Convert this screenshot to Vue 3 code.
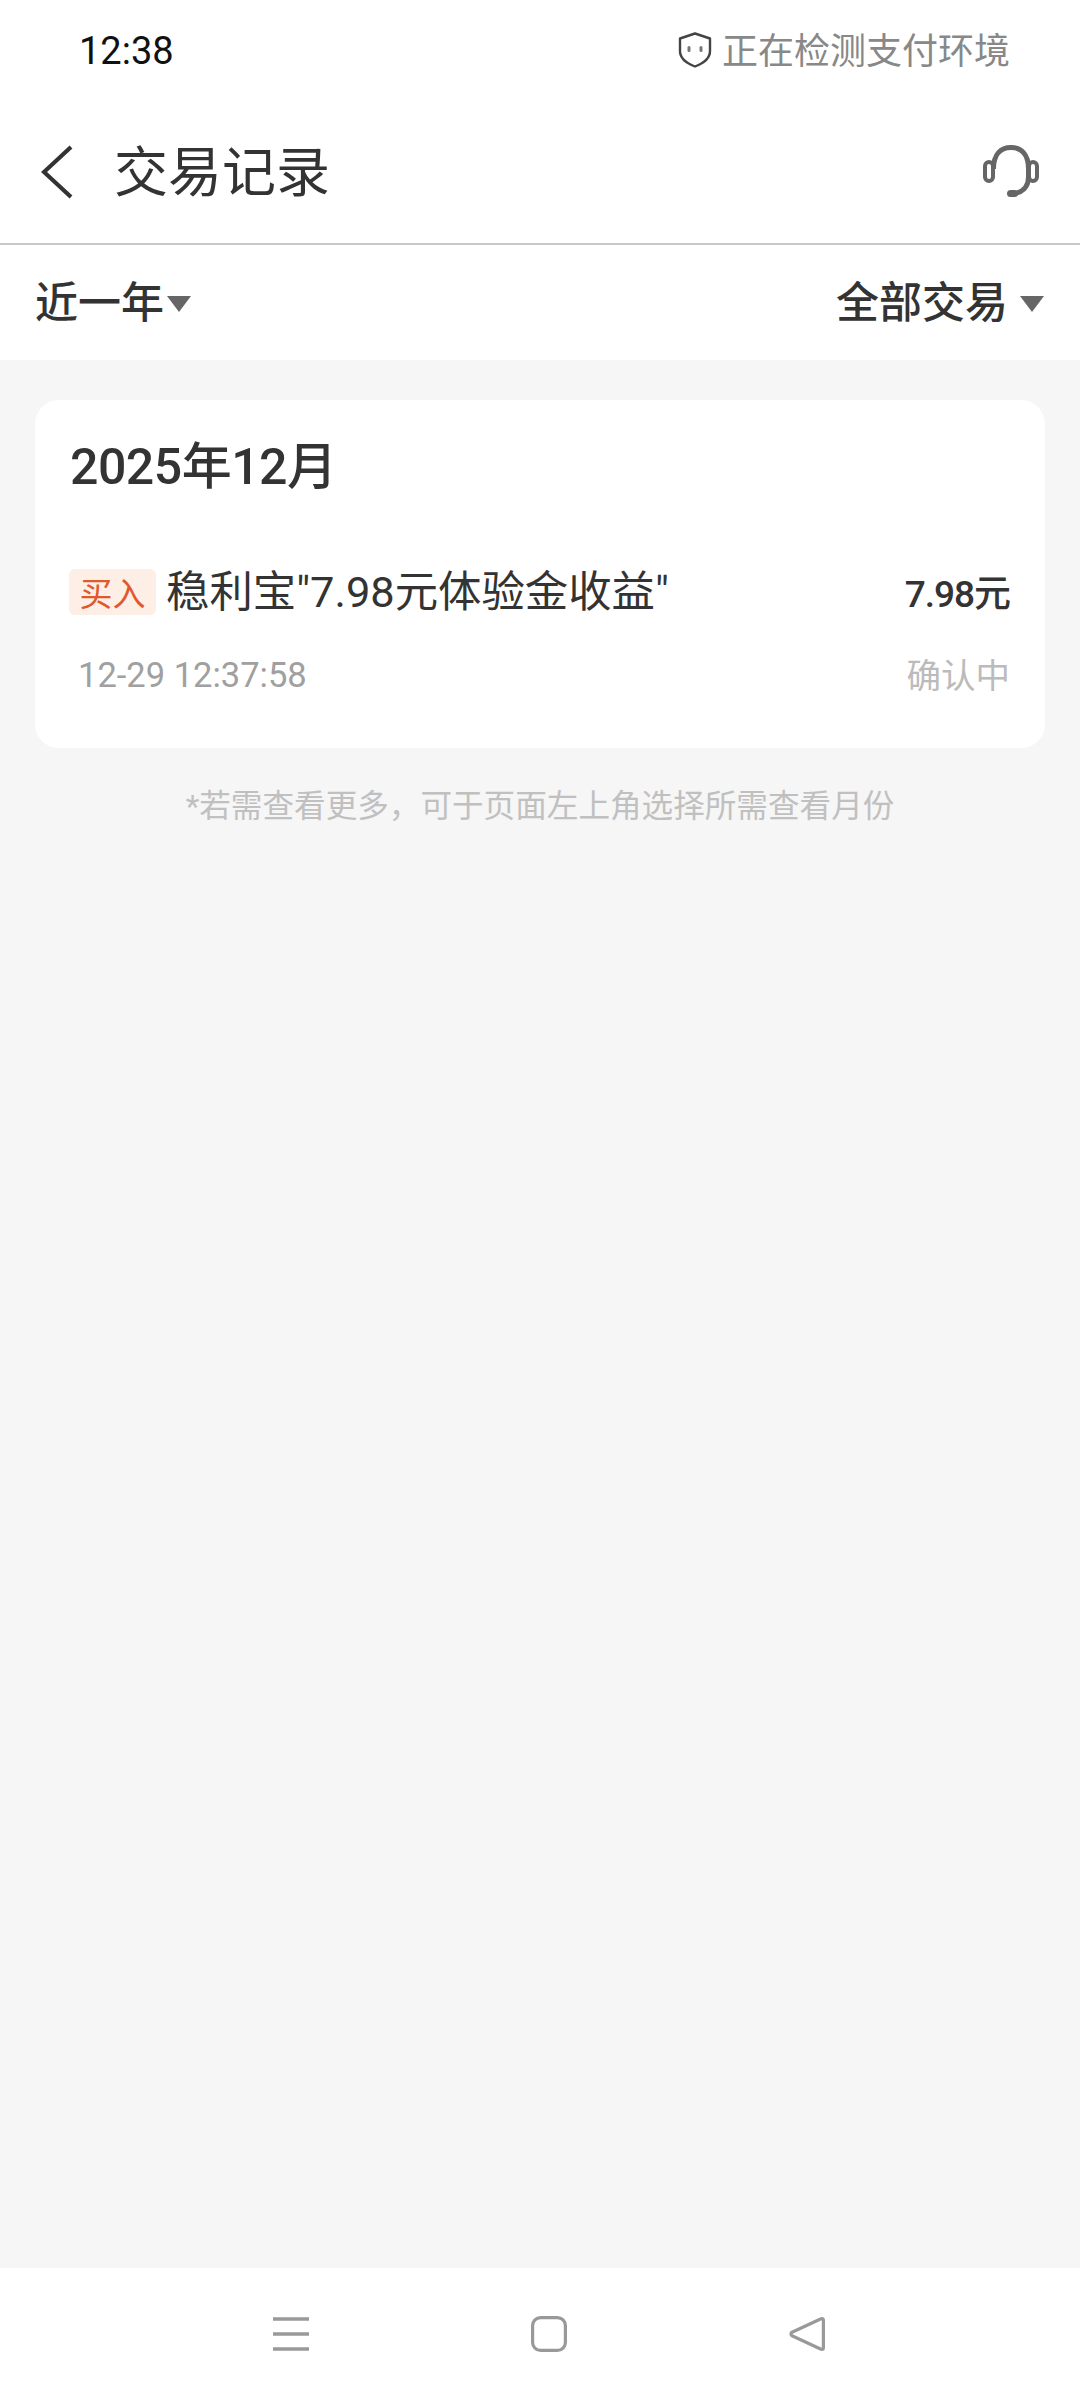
<template>
  <div class="page">
    <!-- 状态栏 -->
    <div class="status-bar">
      <span class="clock">12:38</span>
      <div class="env">
        <svg class="shield" viewBox="0 0 34 36" width="34" height="36" fill="none">
          <path d="M17 1.5 L32 6.5 V19 C32 26 25 31.5 17 34.5 C9 31.5 2 26 2 19 V6.5 Z" stroke="#444" stroke-width="2.4" stroke-linejoin="round" />
          <rect x="9.5" y="14" width="3" height="6" rx="1.5" fill="#777" />
          <rect x="21.5" y="14" width="3" height="6" rx="1.5" fill="#777" />
        </svg>
        <span class="env-text">正在检测支付环境</span>
      </div>
    </div>

    <!-- 标题栏 -->
    <header class="nav-bar">
      <svg class="back" viewBox="0 0 32 54" width="32" height="54" fill="none">
        <path d="M30 2 L3 27 L30 52" stroke="#333" stroke-width="4.2" />
      </svg>
      <h1 class="nav-title">交易记录</h1>
      <svg class="headset" viewBox="0 0 56 54" width="56" height="54" fill="none">
        <path d="M10.5 24 C10.5 9 18 2.5 28 2.5 C38 2.5 45.5 9 45.5 24 V32 C45.5 42 39 48 29 49" stroke="#666" stroke-width="5" />
        <rect x="2" y="17" width="8" height="19" rx="4" stroke="#666" stroke-width="4" />
        <rect x="46" y="17" width="8" height="19" rx="4" stroke="#666" stroke-width="4" />
        <rect x="24" y="45" width="11" height="7" rx="3.5" fill="#666" />
      </svg>
    </header>

    <!-- 筛选 -->
    <div class="filter-bar">
      <div class="filter">
        <span class="filter-text">近一年</span>
        <i class="caret"></i>
      </div>
      <div class="filter filter-right">
        <span class="filter-text">全部交易</span>
        <i class="caret"></i>
      </div>
    </div>

    <main class="content">
      <section class="card">
        <h2 class="month">2025年12月</h2>
        <div class="row">
          <span class="tag">买入</span>
          <span class="row-title">稳利宝"7.98元体验金收益"</span>
          <span class="amount">7.98元</span>
        </div>
        <div class="row-sub">
          <span class="time">12-29 12:37:58</span>
          <span class="state">确认中</span>
        </div>
      </section>
      <p class="tip">*若需查看更多，可于页面左上角选择所需查看月份</p>
    </main>

    <!-- 系统导航 -->
    <footer class="sys-nav">
      <svg viewBox="0 0 36 36" width="36" height="36">
        <path d="M0 3 H36 M0 18 H36 M0 33 H36" stroke="#999" stroke-width="3.4" fill="none" />
      </svg>
      <svg viewBox="0 0 36 36" width="36" height="36" fill="none">
        <rect x="1.6" y="1.6" width="32.8" height="32.8" rx="8" stroke="#999" stroke-width="3.2" />
      </svg>
      <svg viewBox="0 0 36 36" width="36" height="36" fill="none">
        <path d="M33 2.5 C34 2.5 34.4 3.4 34.4 4.5 V31.5 C34.4 32.6 34 33.5 33 33.5 C32.4 33.5 31.8 33.2 31 32.7 L3 19.8 C1.6 19 1.6 17 3 16.2 L31 3.3 C31.8 2.8 32.4 2.5 33 2.5 Z" stroke="#999" stroke-width="3.2" stroke-linejoin="round" />
      </svg>
    </footer>
  </div>
</template>

<script setup>
</script>

<style>
html,
body {
  margin: 0;
  background: #f6f6f6;
}
</style>

<style scoped>
.page {
  width: 1080px;
  height: 2400px;
  display: flex;
  flex-direction: column;
  background: #f6f6f6;
  font-family: Roboto, "Noto Sans CJK SC", sans-serif;
  color: #333;
}

.status-bar {
  height: 100px;
  flex-shrink: 0;
  box-sizing: border-box;
  padding: 0 70px 0 79px;
  display: flex;
  align-items: center;
  justify-content: space-between;
  background: #fff;
}

.clock {
  margin-top: 2px;
  font-size: 38px;
  color: #111;
}

.env {
  display: flex;
  align-items: center;
  gap: 10px;
}

.env-text {
  margin-bottom: 5px;
  font-size: 36px;
  color: #888;
}

.nav-bar {
  height: 145px;
  flex-shrink: 0;
  box-sizing: border-box;
  padding: 0 41px;
  display: flex;
  align-items: center;
  background: #fff;
  border-bottom: 2px solid #c8c8c8;
}

.nav-title {
  margin: 0 0 6px 41px;
  flex: 1;
  font-size: 54px;
  font-weight: 400;
  color: #333;
}

.filter-bar {
  height: 115px;
  flex-shrink: 0;
  box-sizing: border-box;
  padding: 0 36px 0 35px;
  display: flex;
  align-items: center;
  justify-content: space-between;
  background: #fff;
  font-size: 43px;
  font-weight: 500;
}

.filter {
  display: flex;
  align-items: center;
  gap: 3px;
}

.filter-right {
  gap: 12px;
}

.filter-text {
  margin-bottom: 7px;
}

.caret {
  width: 0;
  height: 0;
  margin-top: 3px;
  border-left: 12px solid transparent;
  border-right: 12px solid transparent;
  border-top: 16px solid #666;
}

.content {
  flex: 1;
  padding: 40px 35px 0;
}

.card {
  box-sizing: border-box;
  height: 348px;
  padding: 34px 35px 0;
  background: #fff;
  border-radius: 24px;
}

.month {
  margin: 0;
  font-size: 50px;
  line-height: 66px;
  font-weight: 500;
  letter-spacing: -0.5px;
  color: #333;
}

.row {
  margin-top: 61px;
  height: 62px;
  display: flex;
  align-items: center;
}

.tag {
  width: 87px;
  height: 46px;
  margin-left: -1px;
  flex-shrink: 0;
  display: flex;
  align-items: center;
  justify-content: center;
  font-size: 33px;
  color: #e0582c;
  background: #fdeee6;
  border-radius: 6px;
}

.row-title {
  margin: 0 0 8px 10px;
  flex: 1;
  font-size: 43.4px;
  color: #333;
}

.amount {
  margin-bottom: 2px;
  font-size: 37px;
  font-weight: 500;
  letter-spacing: -1px;
  color: #333;
}

.row-sub {
  margin-top: 25px;
  padding-left: 8px;
  display: flex;
  align-items: center;
  justify-content: space-between;
}

.time {
  font-size: 34.5px;
  color: #a0a0a0;
}

.state {
  margin-bottom: 4px;
  font-size: 34.5px;
  color: #bbb;
}

.tip {
  margin: 37px 0 0;
  text-align: center;
  font-size: 31.6px;
  line-height: 44px;
  color: #c0c0c0;
}

.sys-nav {
  height: 132px;
  flex-shrink: 0;
  box-sizing: border-box;
  padding: 0 255px 0 273px;
  display: flex;
  align-items: center;
  justify-content: space-between;
  background: #fff;
}
</style>
